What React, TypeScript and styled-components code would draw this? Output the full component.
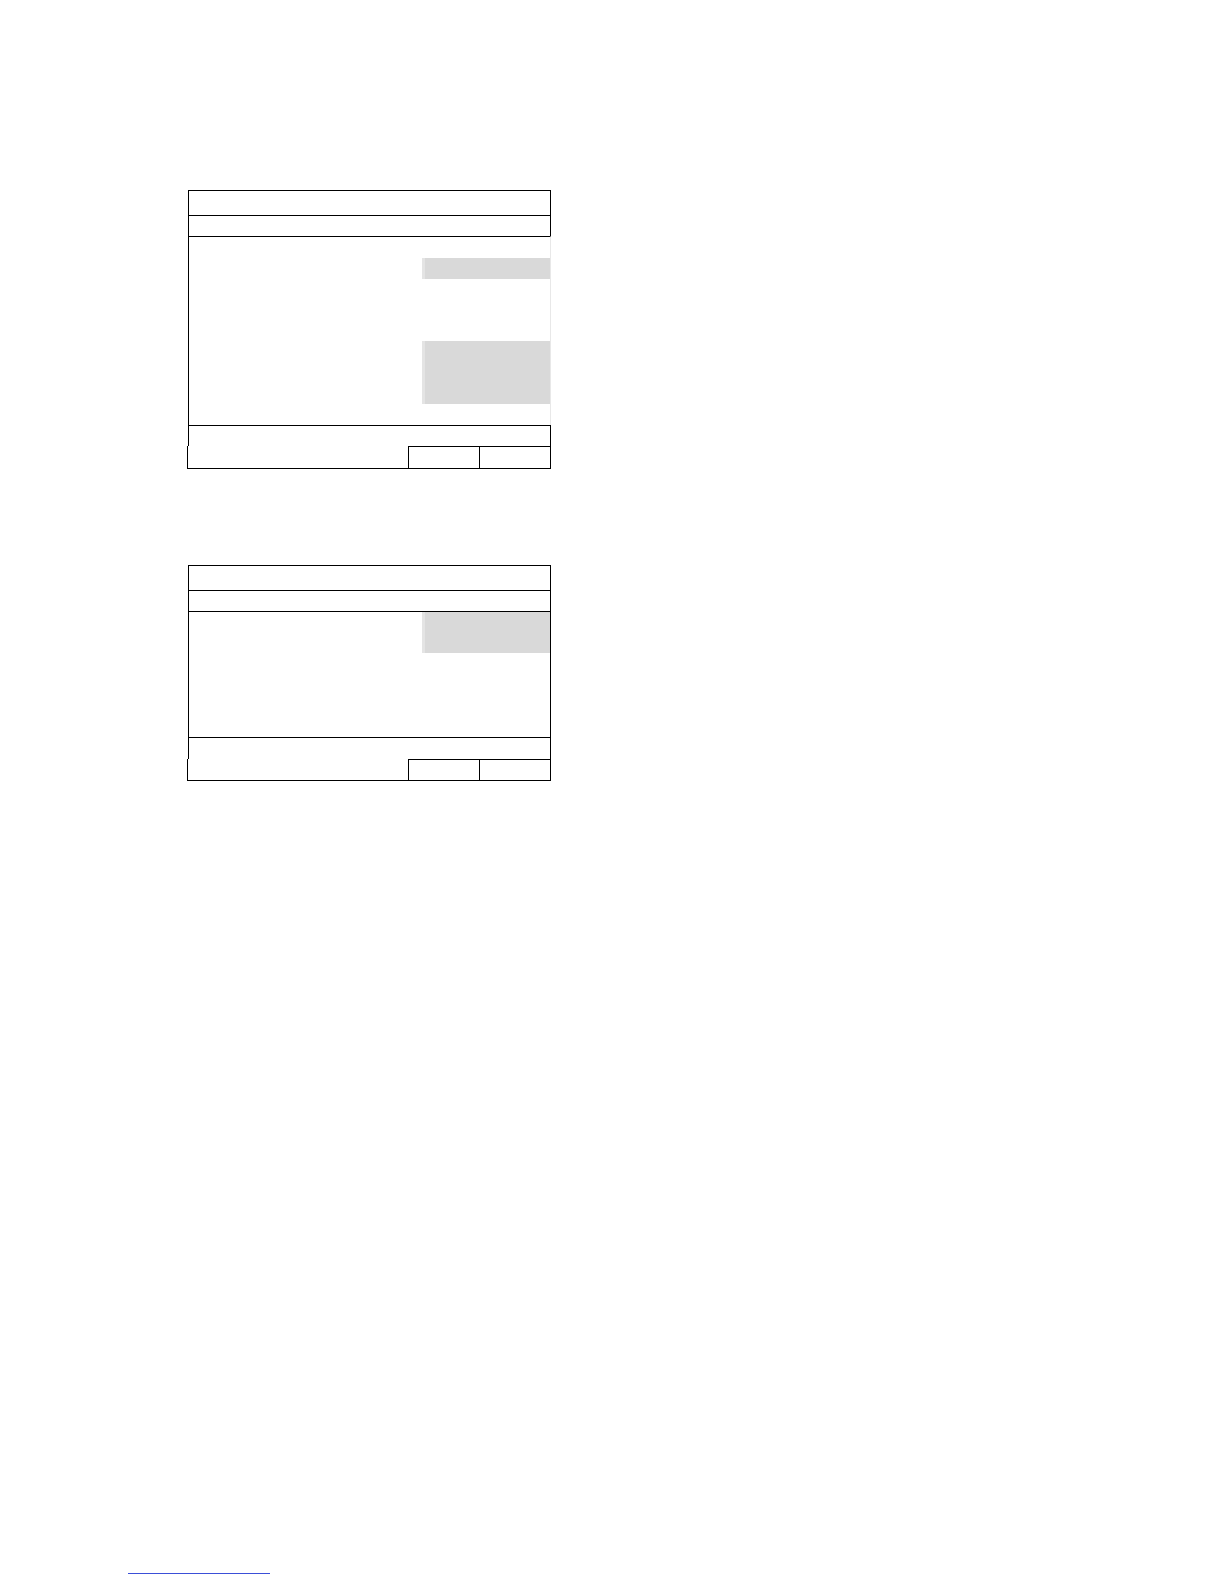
import React from "react";
import styled, { createGlobalStyle } from "styled-components";

const GlobalStyle = createGlobalStyle`
  html, body {
    margin: 0;
    padding: 0;
    background: #ffffff;
    font-family: "Liberation Sans", Arial, sans-serif;
  }
  * {
    box-sizing: border-box;
  }
`;

interface Field {
  top: number;
  height: number;
}

interface PanelSpec {
  top: number;
  headerHeight: number;
  subHeight: number;
  bodyHeight: number;
  infoHeight: number;
  buttonHeight: number;
  faintRight?: boolean;
  fields: Field[];
}

// two dialog frames, sizes read off the reference
const panels: PanelSpec[] = [
  {
    top: 190,
    headerHeight: 25,
    subHeight: 21,
    bodyHeight: 189,
    infoHeight: 21,
    buttonHeight: 23,
    faintRight: true,
    fields: [
      { top: 21, height: 21 },
      { top: 62, height: 63 },
    ],
  },
  {
    top: 96,
    headerHeight: 25,
    subHeight: 21,
    bodyHeight: 126,
    infoHeight: 22,
    buttonHeight: 22,
    fields: [{ top: 0, height: 41 }],
  },
];

export default function App() {
  return (
    <>
      <GlobalStyle />
      <Page>
        {panels.map((p, i) => (
          <Panel key={i} $top={p.top}>
            <Row $height={p.headerHeight} />
            <Row $height={p.subHeight} />
            <Body $height={p.bodyHeight} $faintRight={p.faintRight}>
              {p.fields.map((f, j) => (
                <GrayField key={j} $top={f.top} $height={f.height} />
              ))}
            </Body>
            <Row $height={p.infoHeight} />
            <ButtonRow $height={p.buttonHeight}>
              <Spacer />
              <Button />
              <Button $last />
            </ButtonRow>
          </Panel>
        ))}
        <LinkLine />
      </Page>
    </>
  );
}

const Page = styled.div`
  display: flex;
  flex-direction: column;
  width: 1224px;
  min-height: 1584px;
  background: #ffffff;
`;

const Panel = styled.div<{ $top: number }>`
  display: flex;
  flex-direction: column;
  width: 363px;
  margin-left: 188px;
  margin-top: ${(p) => p.$top}px;
`;

const Row = styled.div<{ $height: number }>`
  height: ${(p) => p.$height}px;
  border-top: 1px solid #000;
  border-left: 1px solid #000;
  border-right: 1px solid #000;
`;

const Body = styled.div<{ $height: number; $faintRight?: boolean }>`
  display: flex;
  flex-direction: column;
  align-items: flex-end;
  height: ${(p) => p.$height}px;
  border-top: 1px solid #000;
  border-left: 1px solid #000;
  border-right: 1px solid ${(p) => (p.$faintRight ? "#e8e8e8" : "#000")};
`;

const GrayField = styled.div<{ $top: number; $height: number }>`
  width: 128px;
  height: ${(p) => p.$height}px;
  margin-top: ${(p) => p.$top}px;
  background: #d9d9d9;
  border-left: 3px solid #e4e4e4;
`;

const ButtonRow = styled.div<{ $height: number }>`
  display: flex;
  height: ${(p) => p.$height}px;
  margin-left: -1px;
  border-left: 1px solid #000;
  border-bottom: 1px solid #000;
`;

const Spacer = styled.div`
  flex: 1;
`;

const Button = styled.div<{ $last?: boolean }>`
  width: ${(p) => (p.$last ? 72 : 71)}px;
  border-top: 1px solid #000;
  border-left: 1px solid #000;
  border-right: ${(p) => (p.$last ? "1px solid #000" : "none")};
`;

const LinkLine = styled.div`
  width: 142px;
  margin-left: 128px;
  margin-top: 792px;
  border-bottom: 1px solid #3b4fd8;
`;
